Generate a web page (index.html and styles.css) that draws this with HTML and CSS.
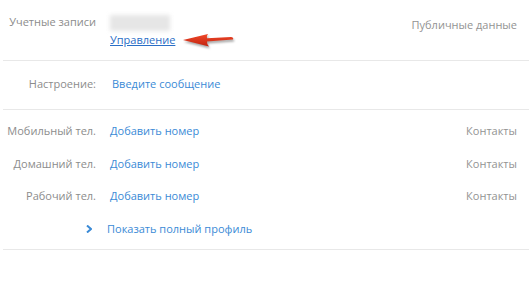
FILE: index.html
```html
<!DOCTYPE html>
<html lang="ru">
<head>
  <meta charset="UTF-8">
  <title>Профиль</title>
  <link rel="stylesheet" href="styles.css">
</head>
<body>
  <div class="profile">

    <div class="section accounts">
      <div class="label">Учетные записи</div>
      <div class="value">
        <div class="blurred"></div>
        <div class="manage-line">
          <a class="manage" href="#">Управление</a>
          <svg class="pointer" width="54" height="18" viewBox="0 0 54 18">
            <defs>
              <linearGradient id="redGrad" x1="0" y1="0" x2="0" y2="1">
                <stop offset="0" stop-color="#f0492a"/>
                <stop offset="1" stop-color="#c2230f"/>
              </linearGradient>
            </defs>
            <path d="M1 9 L26 3 Q24 5.5 25 7.2 L49 6 Q52 6.5 51 8.6 L25 10.6 Q24.5 12.5 27 15.5 Z" fill="url(#redGrad)"/>
          </svg>
        </div>
      </div>
      <div class="aside top">Публичные данные</div>
    </div>

    <div class="section mood">
      <div class="label">Настроение:</div>
      <div class="value"><a class="link" href="#">Введите сообщение</a></div>
      <div class="aside"></div>
    </div>

    <div class="section phones">
      <div class="label">Мобильный тел.</div>
      <div class="value"><a class="link" href="#">Добавить номер</a></div>
      <div class="aside">Контакты</div>

      <div class="label">Домашний тел.</div>
      <div class="value"><a class="link" href="#">Добавить номер</a></div>
      <div class="aside">Контакты</div>

      <div class="label">Рабочий тел.</div>
      <div class="value"><a class="link" href="#">Добавить номер</a></div>
      <div class="aside">Контакты</div>

      <div class="label">
        <svg class="chevron" width="6" height="8" viewBox="0 0 6 8">
          <path d="M1 0.5 L5 4 L1 7.5" fill="none" stroke="#3a8ad6" stroke-width="2"/>
        </svg>
      </div>
      <div class="value more"><a class="link" href="#">Показать полный профиль</a></div>
      <div class="aside"></div>
    </div>

  </div>
</body>
</html>
```

FILE: styles.css
```css
* {
  box-sizing: border-box;
}

body {
  margin: 0;
  padding: 0;
  background: #fff;
  font-family: 'Open Sans', 'DejaVu Sans', sans-serif;
  font-size: 11px;
  line-height: 16px;
  color: #8c8c8c;
}

.profile {
  width: 532px;
}

.section {
  display: grid;
  grid-template-columns: 93px 1fr auto;
  column-gap: 14px;
  margin: 0 3px 0 3px;
  padding-right: 12px;
  border-bottom: 1px solid #e8e8e8;
}

.accounts {
  padding-top: 14px;
  padding-bottom: 11px;
}

.mood {
  padding-top: 15px;
  padding-bottom: 17px;
}

.phones {
  padding-top: 13px;
  padding-bottom: 12px;
  row-gap: 16.5px;
}

.label {
  text-align: right;
  white-space: nowrap;
}

.value {
  white-space: nowrap;
}

.aside {
  text-align: right;
  white-space: nowrap;
  color: #939393;
}

.aside.top {
  padding-top: 3px;
}

.blurred {
  width: 60px;
  height: 16px;
  margin-top: 1px;
  background: #e6e6e6;
  filter: blur(2px);
}

.manage-line {
  display: flex;
  align-items: center;
}

.manage {
  color: #2a6ec6;
  text-decoration: underline;
}

.pointer {
  margin-left: 7px;
  filter: drop-shadow(1px 2px 1px rgba(0, 0, 0, 0.35));
}

.link {
  color: #3a8ad6;
  text-decoration: none;
}

.mood .link {
  margin-left: 2px;
}

.chevron {
  margin-right: 4px;
  margin-bottom: 2px;
  vertical-align: middle;
}

.more {
  margin-left: -3px;
}
```
